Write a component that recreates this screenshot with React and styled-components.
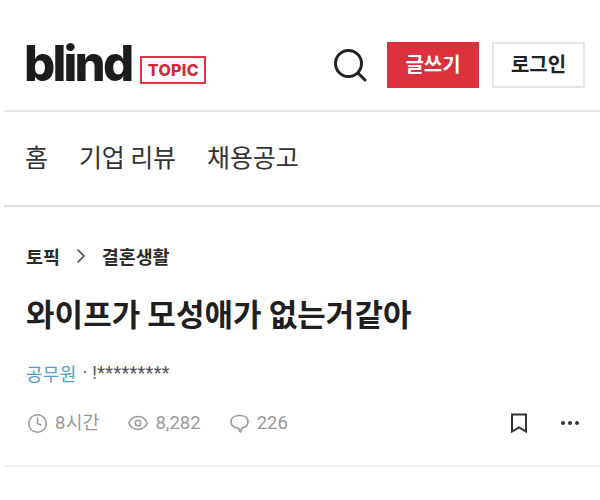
import React from 'react';
import styled, { createGlobalStyle } from 'styled-components';
import { Clock, Eye, MoreHorizontal, ChevronRight } from 'lucide-react';

const Global = createGlobalStyle`
  html, body { margin: 0; padding: 0; background: #fff; }
  body { font-family: "Roboto", "Noto Sans CJK KR", sans-serif; color: #222; overflow: hidden; }
`;
const Page = styled.div`margin-left: 4px; width: 596px;`;
const Header = styled.header`
  height: 112px; box-sizing: border-box; padding: 42px 15px 0 20px;
  display: flex; align-items: flex-start; border-bottom: 2px solid #e6e6e6;
`;
const Logo = styled.div`display: flex; align-items: flex-end; height: 42px; flex: 1;`;
const Wordmark = styled.span`
  font: 800 49px/44px Inter, sans-serif; letter-spacing: -2.8px; color: #1c1c1c; margin-bottom: -2px;
`;
const TopicBadge = styled.span`
  box-sizing: border-box; margin: 0 0 0 9px; width: 66px; height: 28px; border: 2px solid #dc3542;
  color: #cf2c3a; font: 800 16px/24px Inter, sans-serif; letter-spacing: .3px; text-align: center;
`;
const SearchButton = styled.div`display: flex; margin: 6px 19px 0 0; color: #222;`;
const ActionButton = styled.div`
  box-sizing: border-box; height: 46px; width: ${p => p.$w}px; margin-left: ${p => p.$ml}px;
  display: flex; align-items: center; justify-content: center; padding-bottom: 2px;
  font: 700 20px/1 "Noto Sans CJK KR", sans-serif;
  background: ${p => p.$primary ? '#dc303c' : '#fff'};
  color: ${p => p.$primary ? '#fff' : '#222'};
  border: ${p => p.$primary ? 'none' : '2px solid #e4e4e4'};
`;
const Nav = styled.nav`
  height: 95px; box-sizing: border-box; padding: 0 0 4px 21px; display: flex; align-items: center; gap: 31px;
  border-bottom: 2px solid #dcdcdc;
  font: 400 25px/1 "Noto Sans CJK KR", sans-serif; color: #333; letter-spacing: -.1px;
`;
const Article = styled.article`
  height: 260px; box-sizing: border-box; padding: 37px 15px 0 22px; border-bottom: 2px solid #eee;
`;
const Crumbs = styled.div`
  display: flex; align-items: center; height: 24px; gap: 9px;
  font: 700 18.5px/24px "Noto Sans CJK KR", sans-serif; color: #2a2a2a; letter-spacing: -.1px;
`;
const Title = styled.h1`
  margin: 22px 0 0; font: 700 31px/46px "Noto Sans CJK KR", sans-serif; color: #1f1f1f; letter-spacing: .05px;
`;
const Author = styled.div`
  margin-top: 25px; height: 24px; display: flex; align-items: center;
  font: 400 18px/24px "Noto Sans CJK KR", sans-serif; color: #4f9fc4; letter-spacing: .3px;
`;
const AuthorName = styled.span`color: #555; font: 400 18px/24px "Roboto", sans-serif; margin-left: 6px; letter-spacing: .3px;`;
const Meta = styled.div`margin-top: 26px; padding-left: 1px; height: 24px; display: flex; align-items: center; color: #999;`;
const MetaItem = styled.span`
  display: flex; align-items: center; gap: ${p => p.$gap || 7}px; margin-right: 28px;
  font: 400 18.5px/24px "Roboto", "Noto Sans CJK KR", sans-serif;
`;
const Spacer = styled.div`flex: 1;`;
const IconButton = styled.span`display: flex; color: #333; margin-left: ${p => p.$ml || 0}px; margin-right: ${p => p.$mr || 0}px;`;

const SearchIcon = () => (
  <svg width="35" height="35" viewBox="0 0 35 35" fill="none" stroke="currentColor" strokeWidth="3" strokeLinecap="round">
    <circle cx="15.5" cy="15.5" r="13" />
    <path d="M25.5 25.5l6.5 6.5" />
  </svg>
);
const CommentIcon = () => (
  <svg width="21" height="21" viewBox="0 0 21 21" fill="none" stroke="currentColor" strokeWidth="1.7" strokeLinejoin="round">
    <path d="M10.5 2.5C5.6 2.5 2 5 2 8.8c0 3.6 3.2 6.2 7.4 6.4L11.5 19l1.9-4.1C16.8 14.2 19 12 19 8.8 19 5 15.4 2.5 10.5 2.5Z" />
  </svg>
);
const BookmarkIcon = () => (
  <svg width="18" height="20" viewBox="0 0 18 20" fill="none" stroke="currentColor" strokeWidth="2" strokeLinejoin="miter">
    <path d="M2 1.5h14v17l-7-4-7 4Z" />
  </svg>
);

export default function App() {
  return (
    <Page>
      <Global />
      <Header>
        <Logo>
          <Wordmark>blind</Wordmark>
          <TopicBadge>TOPIC</TopicBadge>
        </Logo>
        <SearchButton><SearchIcon /></SearchButton>
        <ActionButton $primary $w={92}>글쓰기</ActionButton>
        <ActionButton $w={93} $ml={13}>로그인</ActionButton>
      </Header>
      <Nav>
        <span>홈</span>
        <span>기업 리뷰</span>
        <span>채용공고</span>
      </Nav>
      <Article>
        <Crumbs>
          <span>토픽</span>
          <ChevronRight size={24} strokeWidth={1.6} color="#444" />
          <span>결혼생활</span>
        </Crumbs>
        <Title>와이프가 모성애가 없는거같아</Title>
        <Author>공무원<AuthorName>· !*********</AuthorName></Author>
        <Meta>
          <MetaItem><Clock size={21} strokeWidth={1.7} />8시간</MetaItem>
          <MetaItem $gap={6}><Eye size={22} strokeWidth={1.7} />8,282</MetaItem>
          <MetaItem><CommentIcon />226</MetaItem>
          <Spacer />
          <IconButton><BookmarkIcon /></IconButton>
          <IconButton $ml={30} $mr={3}><MoreHorizontal size={24} strokeWidth={2} /></IconButton>
        </Meta>
      </Article>
    </Page>
  );
}
